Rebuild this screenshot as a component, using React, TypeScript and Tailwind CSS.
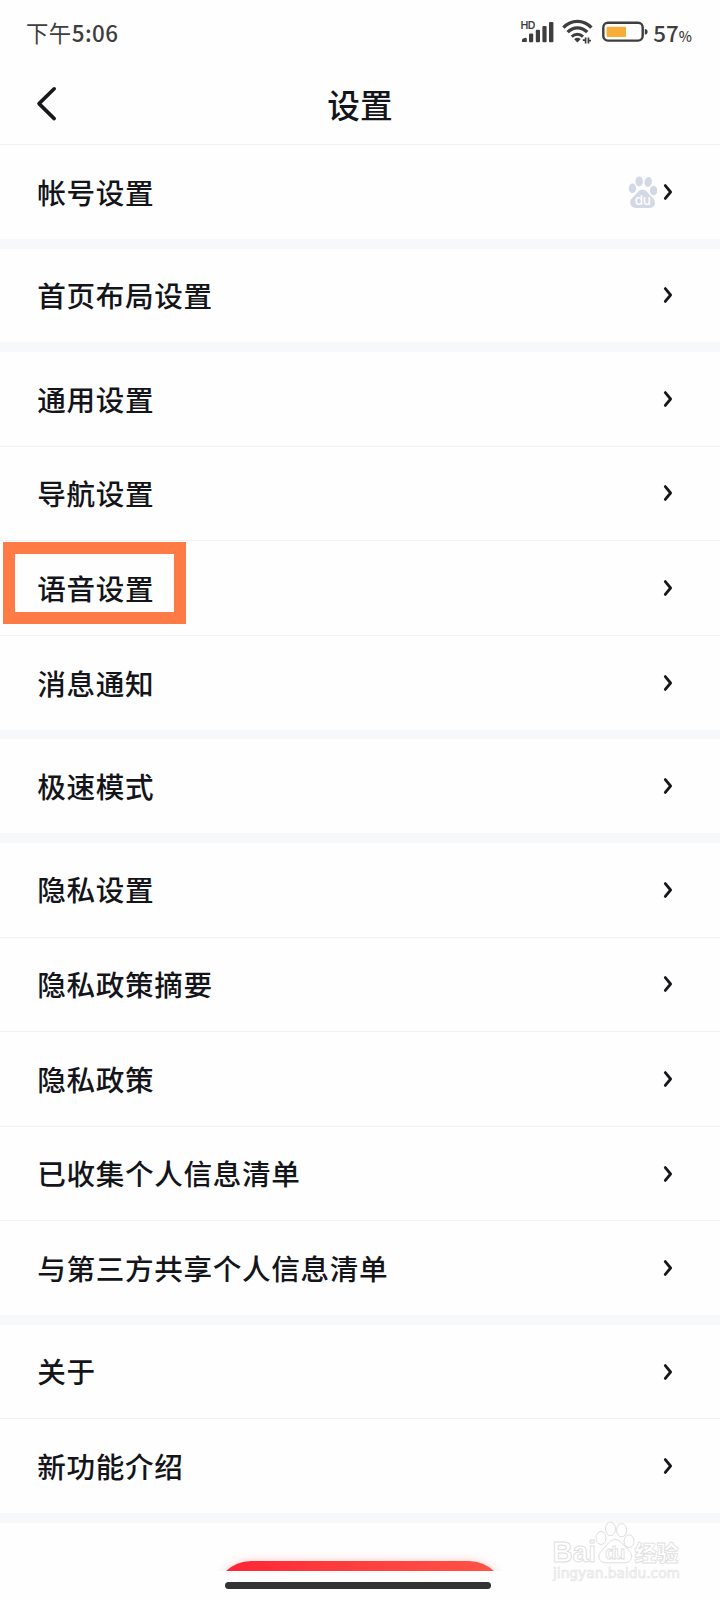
const GROUPS: string[][] = [
  ['帐号设置'],
  ['首页布局设置'],
  ['通用设置', '导航设置', '语音设置', '消息通知'],
  ['极速模式'],
  ['隐私设置', '隐私政策摘要', '隐私政策', '已收集个人信息清单', '与第三方共享个人信息清单'],
  ['关于', '新功能介绍'],
];

function SignalIcon() {
  return (
    <svg width="36" height="26" viewBox="0 0 36 26" fill="#3e3e3e">
      <text x="0.4" y="9.6" fontSize="10.5" fontWeight="600" fontFamily="Inter, sans-serif" textLength="15">HD</text>
      <path d="M2 23V21.2Q2 20 3.2 19.6L5.4 18.8Q6.8 18.6 6.8 20V23Z" />
      <rect x="9" y="14.6" width="4.2" height="8.6" rx="1" />
      <rect x="15.8" y="10.8" width="4.2" height="12.4" rx="1" />
      <rect x="22.4" y="7" width="4.2" height="16.2" rx="1" />
      <rect x="29" y="3" width="4.4" height="20.2" rx="1" />
    </svg>
  );
}

function WifiIcon() {
  return (
    <svg width="32" height="26" viewBox="0 0 32 26" fill="none" stroke="#3e3e3e" strokeWidth="3.3">
      <path d="M1.4 8.6C9.2 0.2 21.6 0.2 29.4 8.6" />
      <path d="M5.6 13.2C11.2 7.4 19.6 7.4 25.2 13.2" />
      <path d="M9.8 17.6C13 14.4 17.8 14.4 21 17.6" strokeWidth="2.9" />
      <path d="M12.2 20.2C14 18.4 16.8 18.4 18.6 20.2L15.4 23.6Z" fill="#3e3e3e" stroke="none" />
      <path d="M20.8 21.2H23.8M23.6 24.6V18.6M26.4 18.6V24.6M26.2 21.6H29" strokeWidth="1.7" />
    </svg>
  );
}

function BatteryIcon() {
  return (
    <svg width="46" height="22" viewBox="0 0 46 22" fill="none">
      <rect x="1.3" y="1.8" width="39.4" height="17.8" rx="4.6" stroke="#3e3e3e" strokeWidth="2.4" />
      <rect x="4.6" y="5.7" width="19.4" height="10.2" rx="1" fill="#f6ae38" />
      <path d="M42.8 7.9Q45.6 7.9 45.6 10.7T42.8 13.5Z" fill="#3e3e3e" />
    </svg>
  );
}

function ChevronIcon() {
  return (
    <svg width="10" height="18" viewBox="0 0 10 18" fill="none" stroke="#17181c" strokeWidth="2.8" strokeLinecap="round" strokeLinejoin="round">
      <path d="M2.3 2.6L7.6 9L2.3 15.4" />
    </svg>
  );
}

function PawIcon() {
  return (
    <svg width="30" height="34" viewBox="0 0 30 34" fill="#d2d8e4">
      <ellipse cx="4.4" cy="13.4" rx="3.7" ry="4.8" />
      <ellipse cx="11.2" cy="6.4" rx="3.7" ry="5" />
      <ellipse cx="20.2" cy="7" rx="3.7" ry="5" transform="rotate(8 20.2 7)" />
      <ellipse cx="25.6" cy="15.6" rx="3.7" ry="4.8" />
      <path d="M14.5 14.4C18.6 14.4 20 18.4 23.4 21.4C26.4 24 27.4 26.4 26.8 29C26 32.4 23.2 33 20.4 33H8.6C5.8 33 3.2 32 2.4 28.8C1.6 25.4 3.2 23.6 5.8 21.4C9.2 18.4 10.4 14.4 14.5 14.4Z" />
      <text x="14.8" y="30" textAnchor="middle" fontSize="13.5" fontWeight="500" fill="#fff" fontFamily="Inter, sans-serif" textLength="16">du</text>
    </svg>
  );
}

function Watermark() {
  return (
    <svg width="134" height="64" viewBox="0 0 134 64" fill="#fff" stroke="#dedede" strokeWidth="1">
      <text x="2.5" y="41.4" fontSize="30" fontWeight="700" fontFamily="'Liberation Sans', sans-serif" textLength="43.5" lengthAdjust="spacingAndGlyphs">Bai</text>
      <ellipse cx="51" cy="17" rx="5" ry="6.5" />
      <ellipse cx="60.5" cy="7.8" rx="5" ry="6.8" />
      <ellipse cx="71.6" cy="9.2" rx="5" ry="6.6" />
      <ellipse cx="79" cy="20.2" rx="5" ry="6.4" />
      <path d="M65 18.6C70.4 18.6 72.6 23.6 77 27.6C81.2 31.4 82.4 34.4 81.2 37.6C80 41 77 41.8 73.4 41.8H57C53 41.8 50.2 40.8 49.2 37.4C48.2 34 49.8 31.2 53.4 28C57.6 24 59.6 18.6 65 18.6Z" />
      <text x="65.2" y="38.4" textAnchor="middle" fontSize="18.5" fontWeight="600" fontFamily="'Liberation Sans', sans-serif" strokeWidth="0.8" textLength="20">du</text>
      <text x="84.6" y="39.6" fontSize="22" fontWeight="900" fontFamily="'Noto Sans CJK SC', sans-serif" strokeWidth="0.8" textLength="44">经验</text>
      <text x="3" y="57.4" fontSize="14" fontFamily="'DejaVu Sans', sans-serif" stroke="#e4e4e4" strokeWidth="0.7" textLength="127" lengthAdjust="spacingAndGlyphs">jingyan.baidu.com</text>
    </svg>
  );
}

function SettingRow({ label, divided }: { label: string; divided: boolean }) {
  return (
    <div
      className={`relative flex items-center justify-between pl-[37.3px] pr-[47px] ${
        divided ? 'h-[94.6px] border-b border-[#eff1f3]' : 'h-[93.9px]'
      }`}
    >
      <span className="text-[28.6px] leading-none font-medium tracking-[0.65px]">{label}</span>
      <span className="flex items-center gap-[5px]">
        {label === '帐号设置' && <PawIcon />}
        <ChevronIcon />
      </span>
      {label === '语音设置' && (
        <div className="absolute left-[3px] top-px h-[82px] w-[183px] border-[12px] border-[#ff7b45]" />
      )}
    </div>
  );
}

export default function App() {
  return (
    <div className="relative flex h-[1600px] w-[720px] flex-col overflow-hidden bg-[#fefefe] font-['Noto_Sans_CJK_SC',sans-serif] text-[#14151a]">
      {/* status bar */}
      <div className="flex h-16 shrink-0 items-center justify-between pl-[26px] pr-[28px] text-[#3e3e3e]">
        <span className="text-[22.4px] leading-none tracking-[0.45px]">下午<span className="font-medium">5:06</span></span>
        <div className="flex items-center">
          <div className="flex"><SignalIcon /></div>
          <div className="ml-[6px] flex"><WifiIcon /></div>
          <div className="ml-[8px] flex"><BatteryIcon /></div>
          <span className="ml-[5px] text-[22.4px] leading-none font-medium">57<span className="text-[14px]">%</span></span>
        </div>
      </div>

      {/* header */}
      <div className="grid h-[81px] shrink-0 grid-cols-3 items-center border-b border-[#eff1f3] px-9">
        <svg width="22" height="36" viewBox="0 0 22 36" fill="none" stroke="#17181c" strokeWidth="3.6" strokeLinecap="round" strokeLinejoin="round">
          <path d="M18.2 2.8L3 17.6L18.2 32.6" />
        </svg>
        <h1 className="text-center text-[32.7px] leading-none font-medium">设置</h1>
      </div>

      {/* setting groups */}
      {GROUPS.map((items) => (
        <div key={items[0]} className="shrink-0">
          {items.map((label, i) => (
            <SettingRow key={label} label={label} divided={i < items.length - 1} />
          ))}
          <div className="h-[9.67px] bg-[#f6f8fa]" />
        </div>
      ))}

      {/* logout button, cut off by the gesture bar */}
      <div className="flex h-[48px] shrink-0 justify-center overflow-hidden pt-[37.5px]">
        <div className="h-24 w-[290px] shrink-0 rounded-[36px] bg-linear-to-r from-[#ff2035] to-[#ff5346] shadow-[0_0_10px_#ff404040]" />
      </div>
      <div className="ml-[225px] mt-[11px] h-[7px] w-[266px] shrink-0 rounded-full bg-[#333]" />

      <div className="absolute left-[550px] top-[1521px]">
        <Watermark />
      </div>
    </div>
  );
}
